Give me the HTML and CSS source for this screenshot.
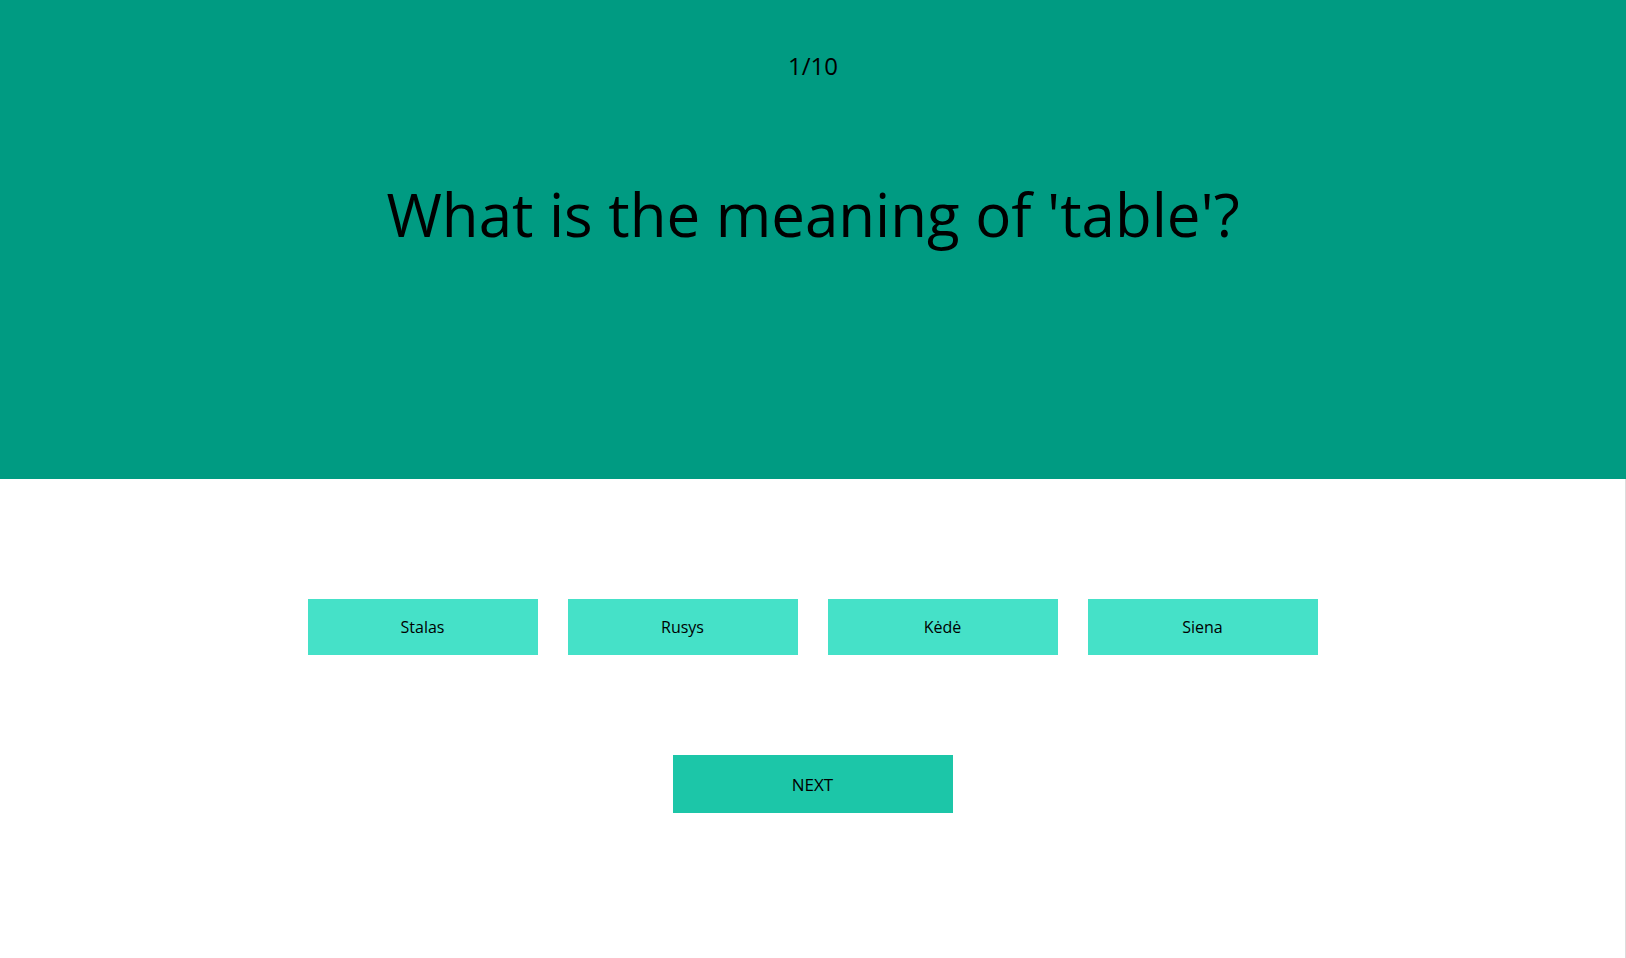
FILE: index.html
```html
<!DOCTYPE html>
<html lang="en">
<head>
<meta charset="utf-8">
<title>Quiz</title>
<link rel="stylesheet" href="styles.css">
</head>
<body>
<div class="app">
  <header class="hero">
    <div class="counter">1/10</div>
    <h1 class="question">What is the meaning of 'table'?</h1>
  </header>
  <main class="answers">
    <div class="options">
      <button class="option">Stalas</button>
      <button class="option">Rusys</button>
      <button class="option">Kėdė</button>
      <button class="option">Siena</button>
    </div>
    <button class="next">NEXT</button>
  </main>
</div>
</body>
</html>
```

FILE: styles.css
```css
* { box-sizing: border-box; }
html, body { margin: 0; padding: 0; height: 100%; }
body {
  font-family: "Open Sans", "Liberation Sans", sans-serif;
  color: #000;
  background: #fff;
}
.app {
  display: flex;
  flex-direction: column;
  min-height: 100vh;
}
.hero {
  background: #009b82;
  height: 479px;
  display: flex;
  flex-direction: column;
  align-items: center;
  padding-top: 49px;
}
.counter {
  font-size: 24px;
  line-height: 33px;
}
.question {
  margin: 91px 0 0;
  font-size: 60px;
  font-weight: 400;
  line-height: 82px;
}
.answers {
  flex: 1;
  display: flex;
  flex-direction: column;
  align-items: center;
  padding-top: 120px;
  border-right: 1px solid #dcdcdc;
}
.options {
  display: flex;
  gap: 30px;
}
.option {
  width: 230px;
  height: 56px;
  border: none;
  background: #45e1c8;
  font-family: inherit;
  font-size: 16px;
  color: #000;
  padding: 0;
}
.next {
  margin-top: 100px;
  width: 280px;
  height: 58px;
  border: none;
  background: #1cc6a8;
  font-family: inherit;
  font-size: 17px;
  color: #000;
  padding: 0;
}
```
